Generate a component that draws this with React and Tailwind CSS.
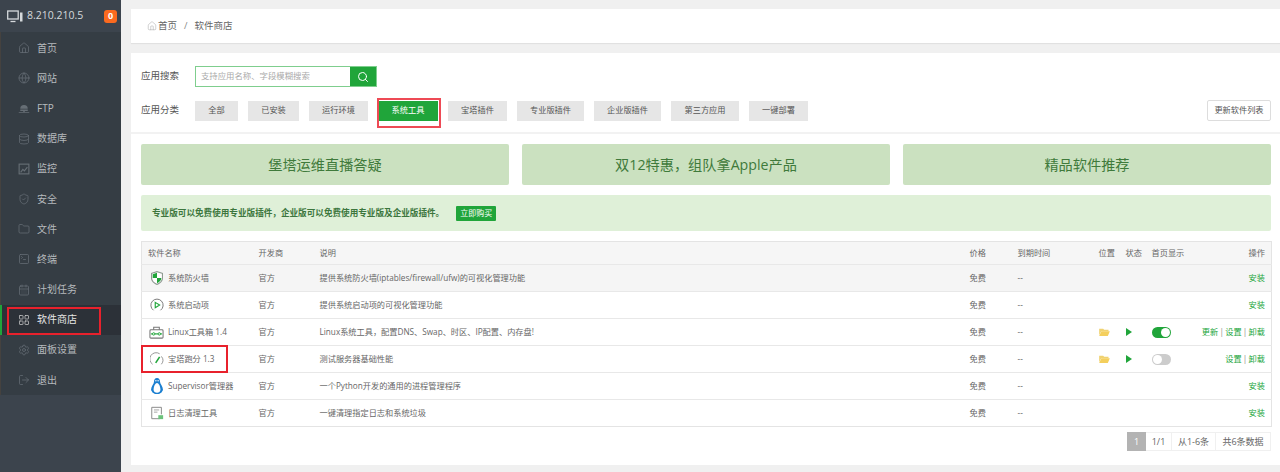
import React from "react";
import {
  Home,
  Globe,
  Database,
  ShieldCheck,
  Folder,
  SquareTerminal,
  CalendarDays,
  LayoutGrid,
  Settings,
  LogOut,
  Search,
} from "lucide-react";

function FtpIcon(props) {
  return (
    <svg viewBox="0 0 16 16" fill="currentColor" {...props}>
      <path d="M3 9a5 5 0 0 1 10 0z" />
      <rect x="3" y="10" width="10" height="2" />
      <rect x="7" y="12" width="2" height="1.5" />
      <rect x="1" y="13.5" width="14" height="1" />
    </svg>
  );
}

function MonitorChartIcon(props) {
  return (
    <svg viewBox="0 0 16 16" fill="none" stroke="currentColor" strokeWidth="1.2" {...props}>
      <rect x="1.5" y="1.5" width="13" height="13" />
      <path d="M3.5 12.500l3-4 2 2 4-5" />
    </svg>
  );
}

const menu = [
  { label: "首页", icon: Home },
  { label: "网站", icon: Globe },
  { label: "FTP", icon: FtpIcon },
  { label: "数据库", icon: Database },
  { label: "监控", icon: MonitorChartIcon },
  { label: "安全", icon: ShieldCheck },
  { label: "文件", icon: Folder },
  { label: "终端", icon: SquareTerminal },
  { label: "计划任务", icon: CalendarDays },
  { label: "软件商店", icon: LayoutGrid, active: true },
  { label: "面板设置", icon: Settings },
  { label: "退出", icon: LogOut },
];

const categories = [
  { label: "全部", width: "w-[43px]" },
  { label: "已安装", width: "w-[51px]" },
  { label: "运行环境", width: "w-[59px]" },
  { label: "系统工具", width: "w-[60px]", active: true },
  { label: "宝塔插件", width: "w-[59px]" },
  { label: "专业版插件", width: "w-[67px]" },
  { label: "企业版插件", width: "w-[67px]" },
  { label: "第三方应用", width: "w-[68px]" },
  { label: "一键部署", width: "w-[59px]" },
];

function ShieldLogo() {
  return (
    <svg viewBox="0 0 12 14" className="w-[12px] h-[14px]">
      <path d="M6 0l6 2v5c0 3.200-2.600 5.600-6 7-3.400-1.400-6-3.800-6-7V2z" fill="#8f9a92" />
      <path d="M6 1.200l4.900 1.600V7c0 2.600-2.100 4.600-4.900 5.800C3.200 11.600 1.100 9.600 1.100 7V2.800z" fill="#fff" />
      <path d="M6 1.800V7H1.700V3.200zM6 7h4.300c0 2.300-1.800 4.200-4.300 5.200z" fill="#20a53a" />
    </svg>
  );
}

function StartupLogo() {
  return (
    <svg viewBox="0 0 16 16" className="w-[14px] h-[14px]" fill="none">
      <path d="M4 14A7 7 0 1 1 12 14" stroke="#777" strokeWidth="1.100" />
      <path d="M6 5l5 3-5 3z" stroke="#20a53a" strokeWidth="1.300" />
    </svg>
  );
}

function ToolboxLogo() {
  return (
    <svg viewBox="0 0 16 16" className="w-[15px] h-[15px]" fill="none">
      <rect x="1" y="5" width="14" height="9" rx="1" stroke="#777" strokeWidth="1.100" />
      <path d="M5 5V2.500h6V5" stroke="#777" strokeWidth="1.100" />
      <path d="M2 9.500h12" stroke="#20a53a" strokeWidth="1.200" />
      <circle cx="5" cy="9.500" r="1.300" fill="#fff" stroke="#20a53a" />
      <circle cx="11" cy="9.500" r="1.300" fill="#fff" stroke="#20a53a" />
    </svg>
  );
}

function GaugeLogo() {
  return (
    <svg viewBox="0 0 16 16" className="w-[14px] h-[14px]" fill="none">
      <path d="M3 14A7 7 0 0 1 11 2" stroke="#888" strokeWidth="1" />
      <path d="M13 5a7 7 0 0 1 0 9" stroke="#888" strokeWidth="1" />
      <path d="M6.500 12.500L11 5.500" stroke="#20a53a" strokeWidth="1.800" />
    </svg>
  );
}

function PenguinLogo() {
  return (
    <svg viewBox="0 0 12 17" className="w-[12px] h-[17px]">
      <path d="M6 0c2.200 0 3 1.800 3 3.800 0 2 3 4.700 3 8.200l-1.500 2.500L8 16H4l-2.500-1.500L0 12c0-3.500 3-6.200 3-8.200C3 1.800 3.800 0 6 0z" fill="#1b7fd0" />
      <path d="M6 5c1.600 0 3.400 3.200 3.400 6.800 0 1.900-1.500 3-3.400 3s-3.400-1.100-3.400-3C2.600 8.200 4.400 5 6 5z" fill="#fff" />
      <circle cx="4.900" cy="2.800" r=".7" fill="#fff" />
      <circle cx="7.100" cy="2.800" r=".7" fill="#fff" />
    </svg>
  );
}

function LogLogo() {
  return (
    <svg viewBox="0 0 16 16" className="w-[14px] h-[14px]" fill="none">
      <path d="M11 14.500H2V1.500h11v8" stroke="#888" strokeWidth="1.100" />
      <path d="M4.500 4.500h6M4.500 7h4" stroke="#999" strokeWidth="1" />
      <rect x="9.500" y="10.500" width="5.500" height="4.500" fill="#6cc27c" />
    </svg>
  );
}

function FolderOpen() {
  return (
    <svg viewBox="0 0 16 12" className="w-[11px] h-[8px]">
      <path d="M0 1h6l1.500 1.500H14V5H3L0 11z" fill="#f0d271" />
      <path d="M3.200 5H16l-3 7H0z" fill="#f4cf5d" />
    </svg>
  );
}

const rows = [
  { name: "系统防火墙", logo: <ShieldLogo />, desc: "提供系统防火墙(iptables/firewall/ufw)的可视化管理功能", ops: "安装", bg: "bg-[#f5f5f5]" },
  { name: "系统启动项", logo: <StartupLogo />, desc: "提供系统启动项的可视化管理功能", ops: "安装" },
  { name: "Linux工具箱 1.4", logo: <ToolboxLogo />, desc: "Linux系统工具，配置DNS、Swap、时区、IP配置、内存盘!", ops: ["更新", "设置", "卸载"], on: true, installed: true },
  { name: "宝塔跑分 1.3", logo: <GaugeLogo />, desc: "测试服务器基础性能", ops: ["设置", "卸载"], on: false, installed: true, marked: true },
  { name: "Supervisor管理器", logo: <PenguinLogo />, desc: "一个Python开发的通用的进程管理程序", ops: "安装" },
  { name: "日志清理工具", logo: <LogLogo />, desc: "一键清理指定日志和系统垃圾", ops: "安装" },
];

function Sidebar() {
  return (
    <aside className="w-[121px] shrink-0 bg-[#3c444d]">
      <div className="h-[32px] flex items-center pl-[7px] pr-[4px]">
        <svg viewBox="0 0 16 13" className="w-[16px] h-[13px] text-[#d5d9dc]" fill="none" stroke="currentColor">
          <rect x=".7" y="1" width="10.500" height="8" strokeWidth="1.300" />
          <path d="M3.500 11.500h5" strokeWidth="1.300" />
          <rect x="13" y="2.500" width="2.500" height="9" fill="currentColor" stroke="none" />
        </svg>
        <span className="ml-[4px] text-[10.500px] text-[#d5d9dc]">8.210.210.5</span>
        <span className="ml-auto w-[13px] h-[13px] rounded-[3px] bg-[#fb6a1f] text-white text-[9px] font-bold flex items-center justify-center">0</span>
      </div>
      <nav className="bg-[#353d44] h-[363px] pt-[1px] border-l border-[#45423f]">
        {menu.map((item) => {
          const Icon = item.icon;
          return (
            <div
              key={item.label}
              className={`relative h-[30.200px] flex items-center pl-[17px] ${item.active ? "bg-[#2c3138] text-[#e6e6e6]" : "text-[#b6babd]"}`}
            >
              {item.active && <span className="absolute left-[-1px] top-0 bottom-0 w-[2px] bg-[#20a53a]" />}
              {item.active && <span className="absolute left-[6px] top-[2px] w-[94px] h-[28px] border-2 border-[#e8212c]" />}
              <Icon className={`w-[12px] h-[12px] ${item.active ? "text-[#c8c8c8]" : "text-[#666e75]"}`} strokeWidth={1.500} />
              <span className="ml-[7px] text-[10px]">{item.label}</span>
            </div>
          );
        })}
      </nav>
    </aside>
  );
}

function FilterBar() {
  return (
    <div className="pl-[10px] pr-[9px] pt-[13px] pb-[11px] border-b-2 border-[#f2f2f2]">
      <div className="flex items-center h-[21px]">
        <span className="w-[54px] text-[9.500px] text-[#555]">应用搜索</span>
        <div className="flex w-[182px] h-[21px] border border-[#7fce8e]">
          <input
            readOnly
            placeholder="支持应用名称、字段模糊搜索"
            className="flex-1 min-w-0 pl-[5px] text-[8.400px] outline-none placeholder:text-[#aaa]"
          />
          <div className="w-[26px] bg-[#20a53a] flex items-center justify-center">
            <Search className="w-[12px] h-[12px] text-white" strokeWidth={2} />
          </div>
        </div>
      </div>
      <div className="flex items-center mt-[13px]">
        <span className="w-[54px] text-[9.500px] text-[#555]">应用分类</span>
        <div className="flex gap-[10px]">
          {categories.map((c) => (
            <span
              key={c.label}
              className={`relative ${c.width} h-[20px] flex items-center justify-center text-[8.200px] ${c.active ? "bg-[#20a53a] text-white" : "bg-[#e6e6e6] text-[#555]"}`}
            >
              {c.label}
              {c.active && <span className="absolute left-[-1px] top-[-3px] w-[64px] h-[30px] border-2 border-[#ee4a55]" />}
            </span>
          ))}
        </div>
        <button className="ml-auto w-[64px] h-[21px] border border-[#ddd] rounded-[2px] bg-white text-[8.200px] text-[#555]">
          更新软件列表
        </button>
      </div>
    </div>
  );
}

function Banners() {
  return (
    <div className="grid grid-cols-3 gap-[13px] mt-[10px]">
      {["堡塔运维直播答疑", "双12特惠，组队拿Apple产品", "精品软件推荐"].map((t) => (
        <div key={t} className="h-[41px] rounded-[2px] bg-[#cbe1c0] text-[#3f7a3b] text-[14.200px] flex items-center justify-center">
          {t}
        </div>
      ))}
    </div>
  );
}

function Toggle({ on }) {
  return (
    <span className={`flex items-center w-[19px] h-[11px] rounded-full px-[1px] ${on ? "bg-[#20a53a] justify-end" : "bg-[#ccc] justify-start"}`}>
      <span className="w-[9px] h-[9px] rounded-full bg-white" />
    </span>
  );
}

function Ops({ ops }) {
  if (typeof ops === "string") return <span className="text-[#20a53a]">{ops}</span>;
  return ops.map((op, i) => (
    <span key={op}>
      {i > 0 && <span className="inline-block w-[7px] text-center text-[#888]">|</span>}
      <span className="text-[#20a53a]">{op}</span>
    </span>
  ));
}

function SoftTable() {
  const th = "font-normal text-left pl-[6px]";
  return (
    <table className="mt-[10px] w-full table-fixed border-collapse border border-[#e4e4e4] text-[8.200px] text-[#666]">
      <colgroup>
        <col className="w-[111px]" />
        <col className="w-[61px]" />
        <col className="w-[650px]" />
        <col className="w-[48px]" />
        <col className="w-[81px]" />
        <col className="w-[27px]" />
        <col className="w-[26px]" />
        <col className="w-[50px]" />
        <col className="w-[76px]" />
      </colgroup>
      <thead>
        <tr className="h-[23px] bg-[#f6f6f6]">
          <th className={th}>软件名称</th>
          <th className={th}>开发商</th>
          <th className={th}>说明</th>
          <th className={th}>价格</th>
          <th className={th}>到期时间</th>
          <th className={th}>位置</th>
          <th className={th}>状态</th>
          <th className={th}>首页显示</th>
          <th className="font-normal text-right pr-[6px]">操作</th>
        </tr>
      </thead>
      <tbody>
        {rows.map((r) => (
          <tr key={r.name} className={`h-[27px] border-t border-[#e8e8e8] ${r.bg || ""}`}>
            <td className="relative pl-[7px]">
              {r.marked && <span className="absolute left-[-1px] top-[-1px] w-[87px] h-[28px] border-2 border-[#e8212c]" />}
              <div className="flex items-center">
                <span className="w-[15px] flex justify-center">{r.logo}</span>
                <span className="ml-[4px] whitespace-nowrap">{r.name}</span>
              </div>
            </td>
            <td className="pl-[6px]">官方</td>
            <td className="pl-[6px]">{r.desc}</td>
            <td className="pl-[6px]">免费</td>
            <td className="pl-[6px]">--</td>
            <td className="pl-[6px]">{r.installed && <FolderOpen />}</td>
            <td className="pl-[6px]">
              {r.installed && <span className="block w-0 h-0 border-y-[4px] border-y-transparent border-l-[6px] border-l-[#20a53a]" />}
            </td>
            <td className="pl-[6px]">{r.installed && <Toggle on={r.on} />}</td>
            <td className="text-right pr-[6px] whitespace-nowrap">
              <Ops ops={r.ops} />
            </td>
          </tr>
        ))}
      </tbody>
    </table>
  );
}

function Pagination() {
  const cell = "h-[19px] flex items-center justify-center border border-[#f0f0f0] border-l-0 bg-white";
  return (
    <div className="flex justify-end mt-[5px] text-[9px] text-[#666]">
      <span className="w-[19px] h-[19px] flex items-center justify-center bg-[#b3b3b3] text-white">1</span>
      <span className={`${cell} w-[26px]`}>1/1</span>
      <span className={`${cell} w-[44px]`}>从1-6条</span>
      <span className={`${cell} w-[55px]`}>共6条数据</span>
    </div>
  );
}

export default function App() {
  return (
    <div className="flex h-screen overflow-hidden bg-[#f0f0f0] font-['Open_Sans','Noto_Sans_CJK_SC',sans-serif]">
      <Sidebar />
      <main className="flex-1 min-w-0 pl-[10px] pt-[9px]">
        <div className="h-[34px] bg-white flex items-center pl-[16px] text-[9.500px] text-[#666] shadow-[0_1px_1px_rgba(0,0,0,0.06)]">
          <Home className="w-[10px] h-[10px] text-[#aaa]" strokeWidth={1.300} />
          <span className="ml-[1px]">首页</span>
          <span className="mx-[7px] text-[#888]">/</span>
          <span>软件商店</span>
        </div>
        <div className="mt-[10px] h-[412px] bg-white">
          <FilterBar />
          <div className="pl-[10px] pr-[9px]">
            <Banners />
            <div className="mt-[10px] h-[36px] rounded-[2px] bg-[#dff0d8] flex items-center pl-[11px] text-[8.600px] font-bold text-[#3c763d]">
              专业版可以免费使用专业版插件，企业版可以免费使用专业版及企业版插件。
              <span className="ml-[12px] w-[40px] h-[15px] rounded-[1px] bg-[#20a53a] text-white font-normal text-[8px] flex items-center justify-center">立即购买</span>
            </div>
            <SoftTable />
            <Pagination />
          </div>
        </div>
      </main>
    </div>
  );
}
